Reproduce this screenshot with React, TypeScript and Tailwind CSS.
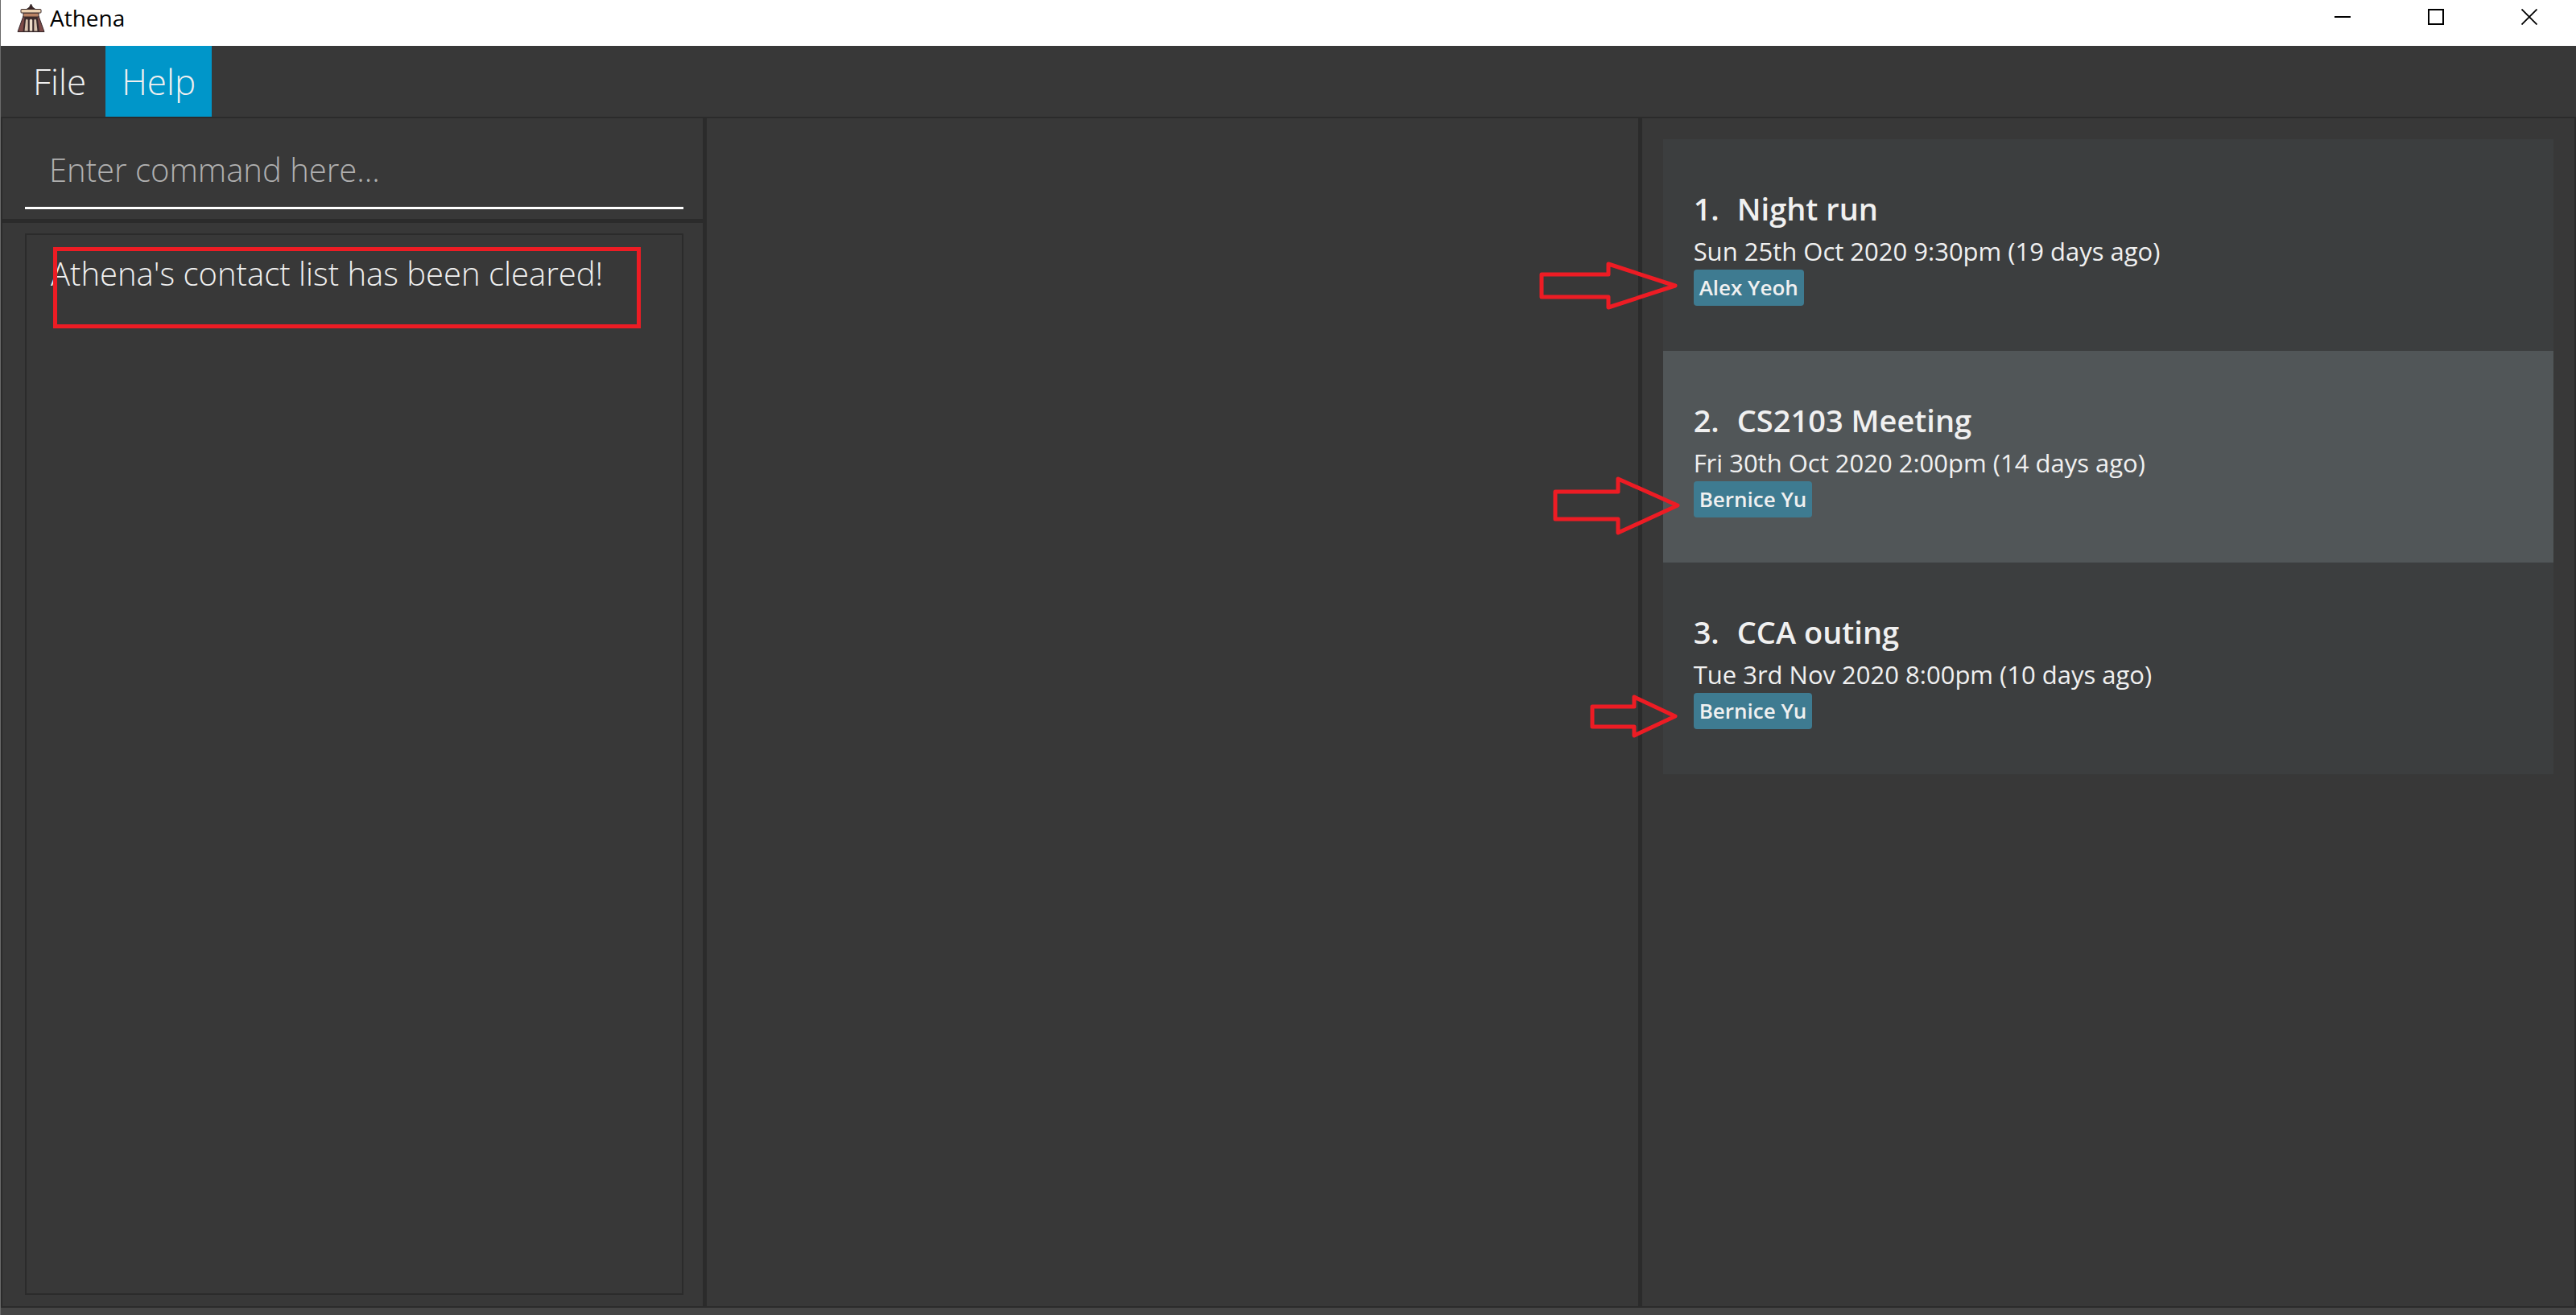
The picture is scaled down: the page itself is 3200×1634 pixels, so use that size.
type EventItem = {
  title: string;
  date: string;
  person: string;
  arrowBox: string;
  arrowPoints: string;
};

const events: EventItem[] = [
  {
    title: "Night run",
    date: "Sun 25th Oct 2020 9:30pm (19 days ago)",
    person: "Alex Yeoh",
    arrowBox: "left-[-156px] top-[151px] h-[62px] w-[175px]",
    arrowPoints: "5,17 88,17 88,4 171,31 88,58 88,45 5,45",
  },
  {
    title: "CS2103 Meeting",
    date: "Fri 30th Oct 2020 2:00pm (14 days ago)",
    person: "Bernice Yu",
    arrowBox: "left-[-138px] top-[154px] h-[77px] w-[161px]",
    arrowPoints: "4,21 82,21 82,5 156,38 82,72 82,55 4,55",
  },
  {
    title: "CCA outing",
    date: "Tue 3rd Nov 2020 8:00pm (10 days ago)",
    person: "Bernice Yu",
    arrowBox: "left-[-93px] top-[163px] h-[56px] w-[113px]",
    arrowPoints: "5,16 57,16 57,4 108,28 57,52 57,41 5,41",
  },
];

function TempleLogo() {
  return (
    <svg viewBox="20 3 35 37" className="h-[37px] w-[35px]" aria-hidden="true">
      <path d="M28 19 L21 38.5 H54 L47 19 Z" fill="#7d4a47" stroke="#35272a" strokeWidth="1" strokeLinejoin="round" />
      <path d="M29.500 20 H45.500 L48 38 H27.500 Z" fill="#3a2a2b" />
      <path d="M31 24 q1.300 -2.500 2.700 0 V37.500 H29.500 Z" fill="#d8c3ae" />
      <path d="M35.800 24 q1.700 -2.500 3.400 0 V37.500 H35.800 Z" fill="#f0dfcb" />
      <path d="M41.300 24 q1.300 -2.500 2.700 0 L45.500 37.500 H41.300 Z" fill="#d8c3ae" />
      <path d="M37.500 4 L39.500 8 L43 10.500 H32 L35.500 8 Z" fill="#3b2526" stroke="#241a1b" strokeWidth="0.8" />
      <rect x="28" y="15" width="19" height="5" fill="#b98263" stroke="#3a2a2b" strokeWidth="1" />
      <rect x="25" y="10.500" width="25" height="4.500" rx="0.800" fill="#ecd0af" stroke="#3a2a2b" strokeWidth="1" />
    </svg>
  );
}

function TitleBar() {
  const button = "flex h-[42px] w-[116px] items-center justify-center text-black";
  return (
    <header className="flex h-[57px] items-start bg-white">
      <div className="flex h-11 grow items-center gap-[6px] pl-5">
        <TempleLogo />
        <h1 className="text-[28px] leading-9 text-black">Athena</h1>
      </div>
      <button type="button" aria-label="Minimize" className={button}>
        <svg viewBox="0 0 20 20" className="size-5"><path d="M0 10H20" stroke="currentColor" strokeWidth="2" /></svg>
      </button>
      <button type="button" aria-label="Maximize" className={button}>
        <svg viewBox="0 0 20 20" className="size-5"><rect x="1" y="1" width="18" height="18" fill="none" stroke="currentColor" strokeWidth="2" /></svg>
      </button>
      <button type="button" aria-label="Close" className={button}>
        <svg viewBox="0 0 20 20" className="size-5"><path d="M0.500 0.500L19.500 19.500M19.500 0.500L0.500 19.500" stroke="currentColor" strokeWidth="1.800" /></svg>
      </button>
    </header>
  );
}

function EventCard({ item, index }: { item: EventItem; index: number }) {
  return (
    <li className="relative py-14 pr-6 pl-[38px] odd:bg-[#3c3e3f] even:bg-[#515658]">
      <h2 className="flex gap-[22px] text-[38px] leading-[60px] font-semibold">
        <span>{index + 1}.</span>
        <span>{item.title}</span>
      </h2>
      <p className="text-[31px] leading-[46px]">{item.date}</p>
      <div className="flex">
        <span className="rounded bg-[#3e7b91] px-[7px] text-[26px] leading-[45px] font-semibold">{item.person}</span>
      </div>
      <svg className={`absolute ${item.arrowBox}`} aria-hidden="true">
        <polygon points={item.arrowPoints} fill="none" stroke="#ed1c24" strokeWidth="5" strokeLinejoin="round" />
      </svg>
    </li>
  );
}

export default function App() {
  const menuButton = "px-5 text-[44px] font-light";
  return (
    <div className="flex min-h-screen flex-col border-l border-[#6a6a6a] bg-[#383838] font-['Open_Sans',sans-serif] text-[#f0f0f0]">
      <TitleBar />
      <nav className="flex h-[88px] gap-1 pl-5">
        <button type="button" className={menuButton}>File</button>
        <button type="button" className={`${menuButton} bg-[#0096c9]`}>Help</button>
      </nav>
      <main className="grid grow grid-cols-[870fr_1156fr_1158fr] gap-[5px] border-2 border-[#2b2b2b] bg-[#2b2b2b]">
        <div className="flex flex-col gap-[5px]">
          <form className="bg-[#383838] pt-4 pr-6 pb-3 pl-7">
            <input
              type="text"
              aria-label="Command"
              placeholder="Enter command here..."
              className="block h-[97px] w-full border-b-3 border-white bg-transparent px-[30px] text-[40px] font-light outline-none placeholder:text-[#b0b0b0]"
            />
          </form>
          <section className="flex grow bg-[#383838] pt-[13px] pr-6 pb-[14px] pl-7">
            <div className="relative grow border-2 border-[#2b2b2b] px-[30px] pt-5">
              <p className="text-[40px] leading-[56px] font-light">Athena's contact list has been cleared!</p>
              <div className="absolute top-[15px] left-[33px] h-[101px] w-[730px] border-5 border-[#ed1c24]" />
            </div>
          </section>
        </div>
        <section aria-label="Contacts" className="bg-[#383838]" />
        <section aria-label="Events" className="bg-[#383838] p-[26px]">
          <ul>
            {events.map((item, i) => (
              <EventCard key={item.title} item={item} index={i} />
            ))}
          </ul>
        </section>
      </main>
      <footer className="h-[9px] bg-[#454545]" />
    </div>
  );
}
